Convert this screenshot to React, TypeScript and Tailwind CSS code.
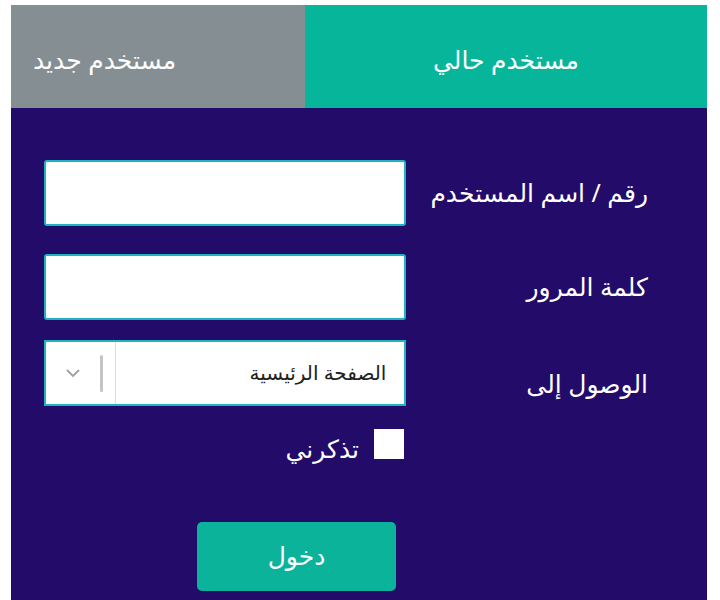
import React from "react";

export default function App() {
  const font = { fontFamily: '"Noto Sans", "DejaVu Sans", sans-serif' };
  return (
    <div className="w-[720px] h-[600px] overflow-hidden bg-white" style={font}>
      <div className="ml-[11px] mt-[5px] w-[696px]">
        <div className="flex h-[103px]">
          <div className="w-[294px] bg-[#858e92] flex items-center pl-[22px] pt-[6px]" dir="rtl">
            <span className="text-white text-[25px] w-full text-left">مستخدم جديد</span>
          </div>
          <div className="flex-1 bg-[#07b59b] flex items-center justify-center pt-[6px]">
            <span className="text-white text-[25px]" dir="rtl">مستخدم حالي</span>
          </div>
        </div>
        <div className="bg-[#230b69] h-[500px] pt-[52px] pr-[59px] pl-[33px]" dir="rtl">
          <div className="flex items-center h-[66px]">
            <div className="w-[242px] text-white text-[25px]">رقم / اسم المستخدم</div>
            <div className="w-[362px] h-[66px] bg-white border-2 border-[#1eb3c4] rounded-[3px]" />
          </div>
          <div className="flex items-center h-[66px] mt-[28px]">
            <div className="w-[242px] text-white text-[25px]">كلمة المرور</div>
            <div className="w-[362px] h-[66px] bg-white border-2 border-[#1eb3c4] rounded-[3px]" />
          </div>
          <div className="flex items-center h-[66px] mt-[20px]">
            <div className="w-[242px] text-white text-[25px] pt-[22px]">الوصول إلى</div>
            <div className="w-[363px] h-[66px] bg-white border-2 border-[#1eb3c4] flex items-center">
              <div className="flex-1 pr-[18px] text-[20px] text-[#222]">الصفحة الرئيسية</div>
              <div className="w-[70px] h-full border-r border-[#ddd] flex items-center">
                <div className="w-[3px] h-[37px] bg-[#c4c4c4] mr-[12px] rounded-full blur-[0.5px]" />
                <svg width="16" height="10" viewBox="0 0 16 10" className="mr-[19px]">
                  <path d="M2 2 L8 8 L14 2" fill="none" stroke="#a0a0a0" strokeWidth="1.8" />
                </svg>
              </div>
            </div>
          </div>
          <div className="flex items-start h-[30px] mt-[23px] mr-[244px]">
            <div className="w-[30px] h-[30px] bg-white shrink-0" />
            <div className="text-white text-[25px] leading-[30px] mr-[15px] mt-[4px]">تذكرني</div>
          </div>
          <div className="flex mt-[63px] mr-[252px]">
            <div className="w-[199px] h-[69px] bg-[#0bb39a] rounded-[5px] flex items-center justify-center text-white text-[25px] pb-[2px]">
              دخول
            </div>
          </div>
        </div>
      </div>
    </div>
  );
}
